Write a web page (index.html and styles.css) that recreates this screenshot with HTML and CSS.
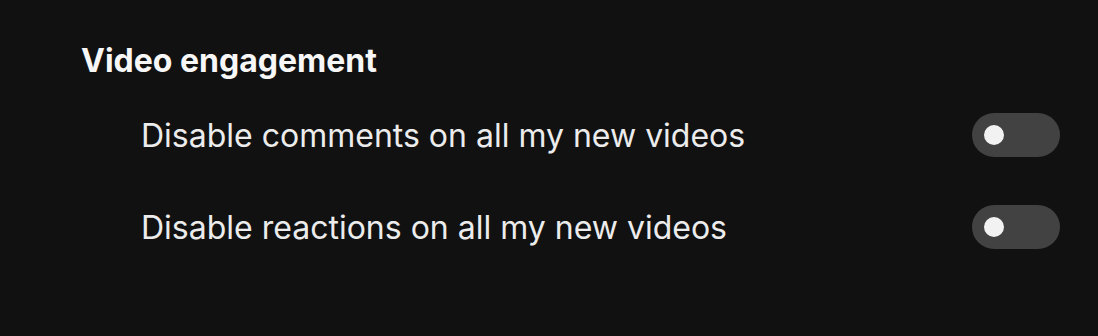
FILE: index.html
```html
<!DOCTYPE html>
<html>
<head>
<meta charset="utf-8">
<link rel="stylesheet" href="styles.css">
</head>
<body>
<section class="settings">
  <h2 class="title">Video engagement</h2>
  <div class="row">
    <span class="label">Disable comments on all my new videos</span>
    <span class="toggle"><span class="knob"></span></span>
  </div>
  <div class="row">
    <span class="label">Disable reactions on all my new videos</span>
    <span class="toggle"><span class="knob"></span></span>
  </div>
</section>
</body>
</html>
```
FILE: styles.css
```css
html, body {
  margin: 0;
  background: #111111;
  height: 100%;
}
body {
  font-family: Inter, "Noto Sans", sans-serif;
  color: #f2f2f2;
}
.settings {
  padding: 41px 38px 0 81px;
}
.title {
  margin: 0 0 32px 0;
  font-size: 32px;
  font-weight: 700;
  line-height: 40px;
  color: #f7f7f7;
}
.row {
  display: flex;
  align-items: center;
  justify-content: space-between;
  padding-left: 60px;
  height: 44px;
  margin-bottom: 48px;
}
.label {
  font-size: 32px;
  font-weight: 400;
  color: #ececec;
}
.toggle {
  width: 88px;
  height: 44px;
  border-radius: 22px;
  background: #424242;
  display: flex;
  align-items: center;
  padding-left: 12px;
  box-sizing: border-box;
}
.knob {
  width: 20px;
  height: 20px;
  border-radius: 50%;
  background: #f2f2f2;
}
```
